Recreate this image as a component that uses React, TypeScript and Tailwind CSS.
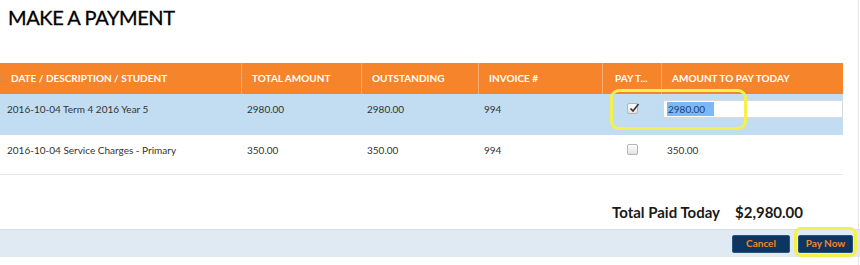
import React from "react";

const cols = "grid grid-cols-[242px_120px_117px_124px_59px_181px]";

function Checkbox({ checked }: { checked?: boolean }) {
    return (
        <span className="relative inline-block w-[11px] h-[11px] rounded-[2px] border border-[#b5b5b5] bg-gradient-to-b from-[#fdfdfd] to-[#e4e4e4]">
            {checked && (
                <svg viewBox="0 0 12 12" className="absolute left-[0px] top-[-2px] w-[12px] h-[12px]">
                    <path d="M2.5 6.5 L5 9 L10.5 2" fill="none" stroke="#333" strokeWidth="1.5" />
                </svg>
            )}
        </span>
    );
}

export default function App() {
    return (
        <div className="relative w-[860px] h-[265px] bg-white text-[#333] font-['Lato','Open_Sans',sans-serif] overflow-hidden">
            {/* right edge line */}
            <div className="absolute right-[1px] top-0 bottom-0 w-px bg-[#e6e6e6]" />

            <h1 className="pl-[8px] pt-[4px] h-[63px] text-[20px] leading-[26px] text-black tracking-[-0.4px] [-webkit-text-stroke:0.3px_black]">MAKE A PAYMENT</h1>

            <div className="w-[843px]">
                {/* Header */}
                <div className={`${cols} h-[31px] bg-[#f5842a] text-white text-[10px] font-bold`}>
                    {["DATE / DESCRIPTION / STUDENT", "TOTAL AMOUNT", "OUTSTANDING", "INVOICE #", "PAY T...", "AMOUNT TO PAY TODAY"].map((h, i) => (
                        <div
                            key={h}
                            className={`flex items-center ${i === 4 ? "pl-[12px]" : "pl-[10px]"} ${i < 5 ? "border-r border-[#f7ad78]" : ""} ${i === 0 ? "pl-[11px]" : ""}`}
                        >
                            {h}
                        </div>
                    ))}
                </div>

                {/* Row 1 */}
                <div className={`${cols} h-[41px] bg-[#c2ddf1] text-[10px]`}>
                    <div className="pl-[7px] pt-[8px]">2016-10-04 Term 4 2016 Year 5</div>
                    <div className="pl-[5px] pt-[8px]">2980.00</div>
                    <div className="pl-[5px] pt-[8px]">2980.00</div>
                    <div className="pl-[5px] pt-[8px]">994</div>
                    <div className="flex justify-center pt-[9px] pr-[1px]">
                        <Checkbox checked />
                    </div>
                    <div className="pt-[6px] pl-px">
                        <div className="h-[18px] bg-white border border-[#d9d9d9] pl-[3px] flex items-center">
                            <span className="bg-[#7bb9f6] text-[#1b3f73] px-[1px] leading-[14px] text-[10px]">2980.00&nbsp;&nbsp;&nbsp;</span>
                        </div>
                    </div>
                </div>

                {/* Row 2 */}
                <div className={`${cols} h-[40px] bg-white text-[10px] border-b border-[#e8e8e8]`}>
                    <div className="pl-[7px] pt-[8px]">2016-10-04 Service Charges - Primary</div>
                    <div className="pl-[5px] pt-[8px]">350.00</div>
                    <div className="pl-[5px] pt-[8px]">350.00</div>
                    <div className="pl-[5px] pt-[8px]">994</div>
                    <div className="flex justify-center pt-[9px]">
                        <Checkbox />
                    </div>
                    <div className="pl-[5px] pt-[8px]">350.00</div>
                </div>
            </div>

            {/* Total */}
            <div className="flex justify-end items-center gap-[15px] pr-[57px] pt-[20px] h-[54px] text-[15px] font-bold text-[#1a1a1a]">
                <span>Total Paid Today</span>
                <span>$2,980.00</span>
            </div>

            {/* Footer bar */}
            <div className="flex justify-end items-center gap-[8px] h-[28px] bg-[#e0eaf3] border-t border-[#d5dee8] pr-[7px]">
                <button className="w-[58px] h-[18px] rounded-[2px] bg-[#0d3561] border border-[#2a5580] text-[#f5842a] text-[10px] font-bold">Cancel</button>
                <button className="w-[55px] h-[18px] rounded-[2px] bg-[#0d3561] border border-[#2a5580] text-[#f5842a] text-[10px] font-bold">Pay Now</button>
            </div>

            {/* Highlight rings */}
            <div className="absolute left-[610px] top-[89px] w-[137px] h-[41px] rounded-[9px] border-[3px] border-[#f4f04c]" />
            <div className="absolute left-[794px] top-[227px] w-[63px] h-[30px] rounded-[7px] border-[3px] border-[#f4f04c]" />
        </div>
    );
}
